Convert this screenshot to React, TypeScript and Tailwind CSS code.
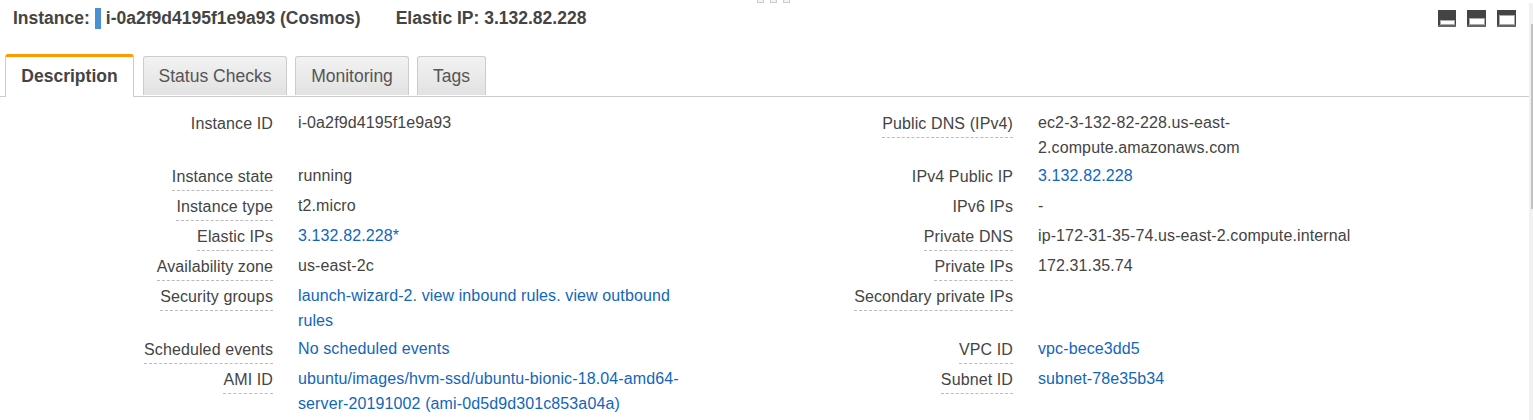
const F = "font-['Liberation_Sans',Arial,sans-serif]";

type Cell = { label: string; dashed?: boolean; value?: string; link?: boolean; nowrap?: boolean };

const rows: { h: string; left: Cell; right: Cell }[] = [
  {
    h: "h-[53px]",
    left: { label: "Instance ID", value: "i-0a2f9d4195f1e9a93" },
    right: { label: "Public DNS (IPv4)", dashed: true, value: "ec2-3-132-82-228.us-east-2.compute.amazonaws.com" },
  },
  {
    h: "h-[30px]",
    left: { label: "Instance state", dashed: true, value: "running" },
    right: { label: "IPv4 Public IP", value: "3.132.82.228", link: true },
  },
  {
    h: "h-[30px]",
    left: { label: "Instance type", dashed: true, value: "t2.micro" },
    right: { label: "IPv6 IPs", value: "-" },
  },
  {
    h: "h-[30px]",
    left: { label: "Elastic IPs", dashed: true, value: "3.132.82.228*", link: true },
    right: { label: "Private DNS", dashed: true, value: "ip-172-31-35-74.us-east-2.compute.internal", nowrap: true },
  },
  {
    h: "h-[30px]",
    left: { label: "Availability zone", dashed: true, value: "us-east-2c" },
    right: { label: "Private IPs", dashed: true, value: "172.31.35.74" },
  },
  {
    h: "h-[53px]",
    left: { label: "Security groups", dashed: true, value: "launch-wizard-2. view inbound rules. view outbound rules", link: true },
    right: { label: "Secondary private IPs", dashed: true },
  },
  {
    h: "h-[30px]",
    left: { label: "Scheduled events", dashed: true, value: "No scheduled events", link: true },
    right: { label: "VPC ID", dashed: true, value: "vpc-bece3dd5", link: true },
  },
  {
    h: "h-[53px]",
    left: { label: "AMI ID", dashed: true, value: "ubuntu/images/hvm-ssd/ubuntu-bionic-18.04-amd64-server-20191002 (ami-0d5d9d301c853a04a)", link: true },
    right: { label: "Subnet ID", dashed: true, value: "subnet-78e35b34", link: true },
  },
];

function Pair({ cell, valueW }: { cell: Cell; valueW: string }) {
  return (
    <div className="flex items-start">
      <div className="w-[273px] shrink-0 flex justify-end">
        <span className={`leading-[20px] pt-[4px] pb-[3px] text-[#444] ${cell.dashed ? "border-b border-dashed border-[#bbb]" : ""}`}>
          {cell.label}
        </span>
      </div>
      <div className={`${valueW} ml-[25px] leading-[25px] ${cell.nowrap ? "whitespace-nowrap" : ""} ${cell.link ? "text-[#1166bb]" : "text-[#444]"}`}>
        {cell.value}
      </div>
    </div>
  );
}

function LayoutIcon({ inner, w }: { inner: string; w: string }) {
  return (
    <div className={`${w} h-[17px] bg-[#444] border-b-2 border-[#666] flex items-end justify-center`}>
      <div className={`${inner} bg-white border border-[#aaa]`} />
    </div>
  );
}

function Tab({ label, active, w }: { label: string; active?: boolean; w: string }) {
  if (active) {
    return (
      <div className={`${w} h-[43px] pb-[2px] -mb-px bg-white border border-b-0 border-[#ccc] border-t-[3px] border-t-[#ff9900] rounded-t-[3px] flex items-center justify-center font-bold text-[17.5px] text-[#444]`}>
        {label}
      </div>
    );
  }
  return (
    <div className={`${w} h-[39px] mb-[1px] bg-gradient-to-b from-[#f2f2f2] to-[#e2e2e2] border border-b-0 border-[#ccc] rounded-t-[3px] flex items-center justify-center text-[17.5px] text-[#555]`}>
      {label}
    </div>
  );
}

export default function App() {
  return (
    <div className={`${F} relative w-[1533px] h-[420px] overflow-hidden bg-white text-[16px] tracking-[0.11px]`}>
      <div className="absolute left-[757px] top-0 flex gap-[6px]">
        {[0, 1, 2].map((i) => (
          <div key={i} className="w-[7px] h-[3px] bg-[#f4f4f4] border border-t-0 border-[#ccc]" />
        ))}
      </div>
      <div className="absolute right-0 top-[3px] bottom-0 w-[4px] bg-[#f1f1f1]">
        <div className="mt-[21px] ml-[2px] h-[185px] bg-[#c1c1c1]" />
      </div>

      <div className="h-[37px] flex items-center pl-[13px] pr-[17px] font-bold text-[#444] text-[17.5px] tracking-normal">
        <span>Instance:</span>
        <span className="ml-[5px] w-[6px] h-[21px] bg-[#4a90d2]" />
        <span className="ml-[5px]">i-0a2f9d4195f1e9a93 (Cosmos)</span>
        <span className="ml-[35px]">Elastic IP: 3.132.82.228</span>
        <div className="ml-auto flex gap-[11px]">
          <LayoutIcon w="w-[18px]" inner="h-[5px] w-[15px]" />
          <LayoutIcon w="w-[19px]" inner="h-[7px] w-[16px]" />
          <LayoutIcon w="w-[19px]" inner="h-[10px] w-[16px]" />
        </div>
      </div>

      <div className="mt-[16px] h-[44px] w-[1529px] pl-[5px] flex items-end gap-[8px] border-b border-[#ccc] tracking-normal">
        <Tab label="Description" active w="w-[129px] mr-[1px]" />
        <Tab label="Status Checks" w="w-[144px]" />
        <Tab label="Monitoring" w="w-[114px]" />
        <Tab label="Tags" w="w-[69px]" />
      </div>

      <div className="pt-[13px]">
        {rows.map((r) => (
          <div key={r.left.label} className={`${r.h} flex`}>
            <div className="w-[740px] shrink-0">
              <Pair cell={r.left} valueW="w-[385px]" />
            </div>
            <Pair cell={r.right} valueW="w-[225px]" />
          </div>
        ))}
      </div>
    </div>
  );
}
